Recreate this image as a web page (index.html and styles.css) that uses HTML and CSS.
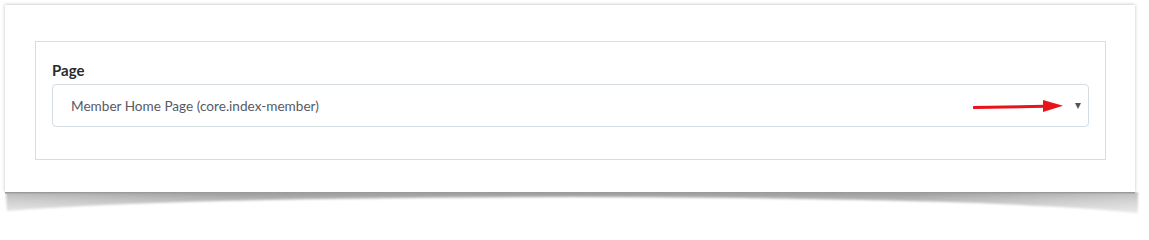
FILE: index.html
```html
<!DOCTYPE html>
<html>
<head>
<meta charset="utf-8">
<link rel="stylesheet" href="styles.css">
</head>
<body>
<div class="frame">
  <div class="card">
    <div class="panel">
      <label class="label">Page</label>
      <div class="select">
        <span class="value">Member Home Page (core.index-member)</span>
        <span class="caret"></span>
        <svg class="annot" width="100" height="16" viewBox="0 0 100 16">
          <path d="M1 9.6 L72 8.2" stroke="#e8141a" stroke-width="3" stroke-linecap="round" fill="none"/>
          <path d="M70 2 L90 7.8 L70 14 Z" fill="#e8141a"/>
        </svg>
      </div>
    </div>
  </div>
  <svg class="curl" width="1145" height="26" viewBox="0 0 1145 26">
    <defs>
      <linearGradient id="g" x1="0" y1="0" x2="0" y2="1">
        <stop offset="0" stop-color="#929292"/>
        <stop offset="0.35" stop-color="#b2b2b2"/>
        <stop offset="1" stop-color="#dedede"/>
      </linearGradient>
      <linearGradient id="h" x1="0" y1="0" x2="1" y2="0">
        <stop offset="0" stop-color="#fff" stop-opacity="0.35"/>
        <stop offset="0.2" stop-color="#fff" stop-opacity="0.05"/>
        <stop offset="0.8" stop-color="#fff" stop-opacity="0.05"/>
        <stop offset="1" stop-color="#fff" stop-opacity="0.4"/>
      </linearGradient>
      <filter id="b" x="-5%" y="-50%" width="110%" height="200%">
        <feGaussianBlur stdDeviation="1.3"/>
      </filter>
    </defs>
    <g filter="url(#b)">
      <path d="M6 0 H1138 V21 Q1000 6 570 5 Q150 6 7 19 Z" fill="url(#g)"/>
      <path d="M6 0 H1138 V21 Q1000 6 570 5 Q150 6 7 19 Z" fill="url(#h)"/>
    </g>
    <rect x="5" y="0" width="1130" height="1.5" fill="#9a9a9a"/>
  </svg>
</div>
</body>
</html>
```

FILE: styles.css
```css
html, body {
  margin: 0;
  padding: 0;
  background: #ffffff;
}
body {
  font-family: "Source Sans Pro", Lato, "Noto Sans", sans-serif;
}
.frame {
  padding: 5px 0 0 5px;
  width: 1140px;
}
.card {
  width: 1130px;
  height: 187px;
  box-sizing: border-box;
  background: #ffffff;
  box-shadow: -1px -1px 3px rgba(0,0,0,0.12), 1px 0 3px rgba(0,0,0,0.12);
  padding: 36px 0 0 30px;
}
.curl {
  display: block;
  margin-left: -5px;
}
.panel {
  width: 1071px;
  height: 119px;
  box-sizing: border-box;
  border: 1px solid #d9dde0;
  padding: 18px 16px 0 16px;
}
.label {
  display: block;
  font-weight: 700;
  font-size: 15px;
  line-height: 20px;
  color: #2b2b2b;
  margin-bottom: 4px;
}
.select {
  position: relative;
  height: 43px;
  box-sizing: border-box;
  border: 1px solid #d4dde3;
  border-radius: 4px;
  display: flex;
  align-items: center;
  justify-content: space-between;
  padding: 0 7px 0 18px;
}
.value {
  font-size: 13.6px;
  color: #585a66;
}
.caret {
  width: 0;
  height: 0;
  border-left: 3.5px solid transparent;
  border-right: 3.5px solid transparent;
  border-top: 6px solid #555555;
  margin-top: 1px;
}
.annot {
  position: absolute;
  left: 920px;
  top: 13px;
}
```
